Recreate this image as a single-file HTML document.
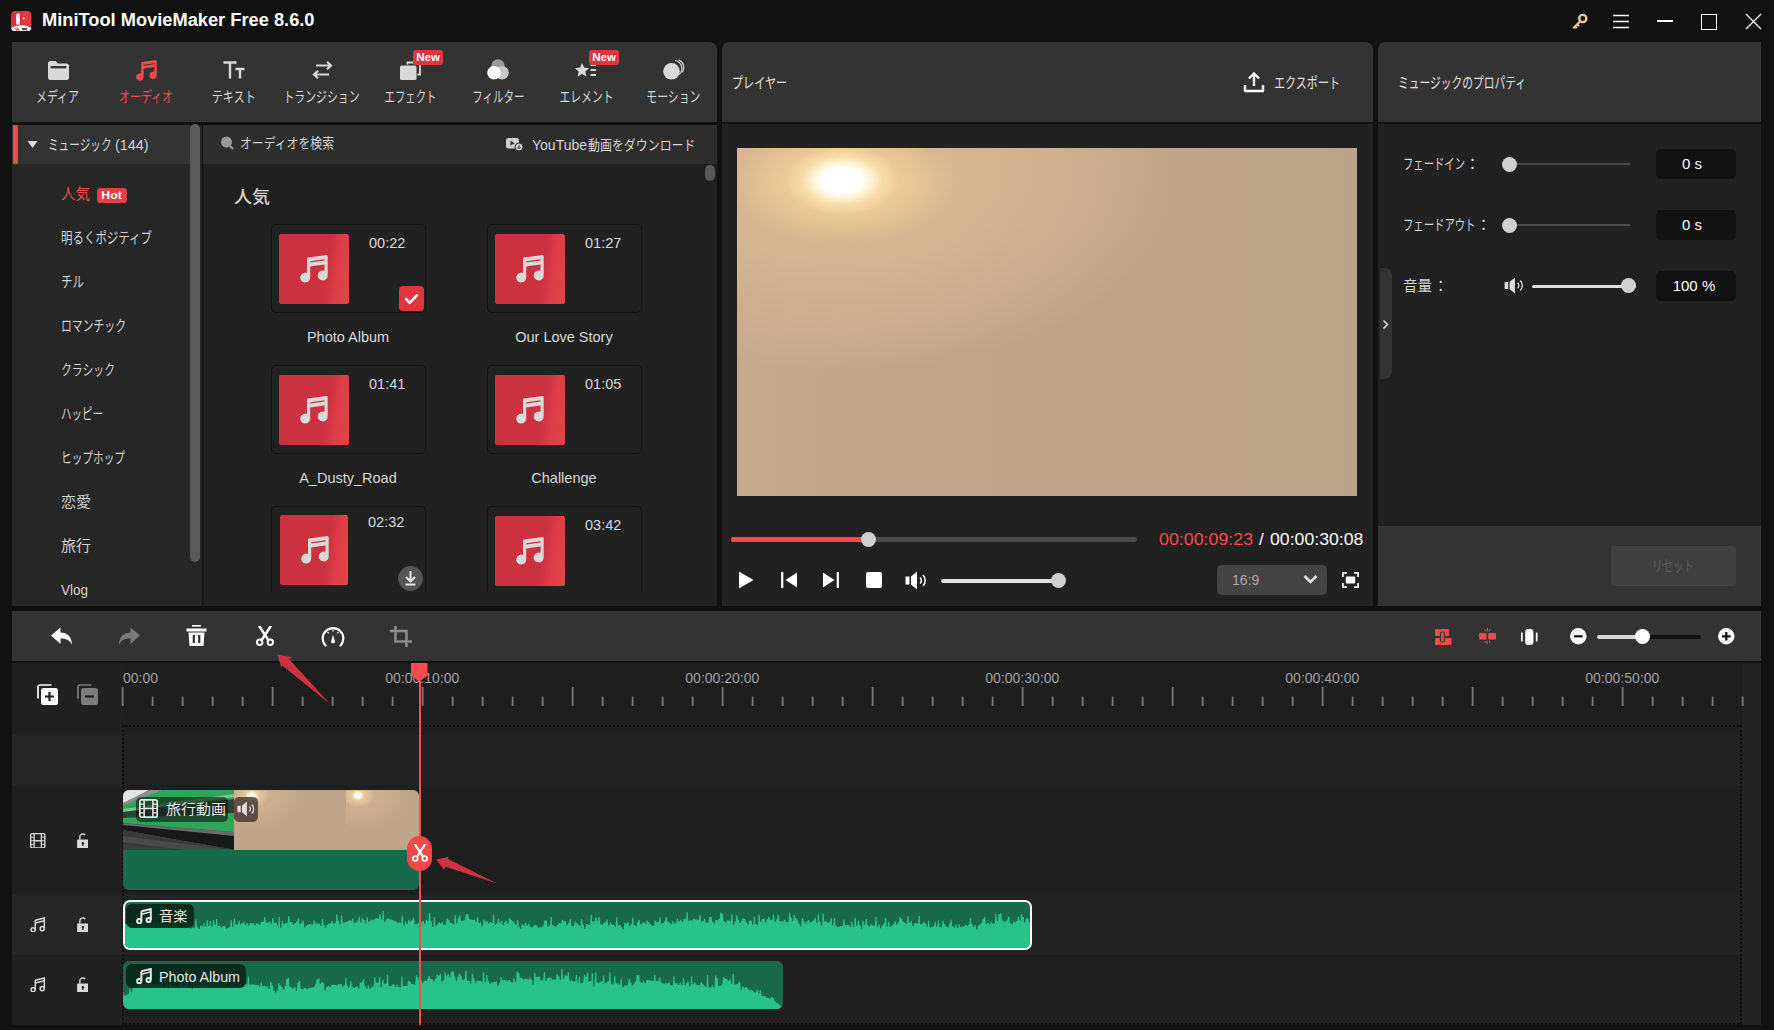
<!DOCTYPE html>
<html lang="ja"><head><meta charset="utf-8"><title>MiniTool MovieMaker Free 8.6.0</title>
<style>
html,body{margin:0;padding:0;background:#111;}
body{width:1774px;height:1030px;position:relative;overflow:hidden;font-family:"Liberation Sans","Noto Sans CJK JP",sans-serif;}
div,span.t,svg{position:absolute;}
span.t{white-space:pre;display:block;}
</style></head><body>
<span class="t" style="left:41.5px;top:6.5px;font-size:18px;line-height:27px;color:#ffffff;font-weight:700;transform:scaleX(1.014);transform-origin:0 50%;">MiniTool MovieMaker Free 8.6.0</span>
<svg style="left:11px;top:10.500px" width="20.500" height="20.500" viewBox="0 0 20.500 20.500"><defs><clipPath id="lg"><rect width="20.500" height="20.500" rx="4.500"/></clipPath></defs><g clip-path="url(#lg)"><rect width="20.500" height="20.500" fill="#d8303c"/><rect x="11" y="0" width="9.500" height="15" fill="#e23a40"/><path d="M5.200 4.200Q5.200 2.400 7.500 2.200Q8.900 2.300 8.900 4v9.400H5.200z" fill="#fff"/><path d="M11.500 6.500l2.600 0.200-1.200 2.400z" fill="#f6e2b0"/><ellipse cx="10.250" cy="20.500" rx="12" ry="6.200" fill="#fff"/><path d="M4.500 17.500l1 1.500 1.200-1.500 1.500 1.800" stroke="#d8303c" stroke-width="1.100" fill="none"/><rect x="11" y="17.200" width="5" height="1.600" fill="#222"/><rect x="3" y="19.700" width="14.500" height="0.800" fill="#f0909a"/></g></svg>
<svg style="left:1570px;top:12px" width="20" height="20" viewBox="0 0 20 20"><circle cx="12.800" cy="6.500" r="3.600" fill="none" stroke="#efc79a" stroke-width="2.400"/><path d="M10 9.500L3.300 16.200M5 14.500l1.800 1.800M7.200 12.300l1.800 1.800" stroke="#efc79a" stroke-width="2.200" fill="none"/></svg>
<svg style="left:1613px;top:14px" width="17" height="15" viewBox="0 0 17 15"><path d="M0 1.5h16M0 7.5h16M0 13.5h16" stroke="#fff" stroke-width="1.700"/></svg>
<div style="left:1657px;top:20.3px;width:16px;height:1.5px;background:#fff;"></div>
<div style="left:1701px;top:14px;width:14px;height:14px;background:transparent;border:1px solid #fff;"></div>
<svg style="left:1745px;top:13px" width="17" height="17" viewBox="0 0 17 17"><path d="M1 1l15 15M16 1L1 16" stroke="#fff" stroke-width="1.300"/></svg>
<div style="left:12px;top:42px;width:705px;height:80px;background:#333;border-radius:0 7px 0 0;"></div>
<span class="t" style="left:27.5px;top:86.0px;font-size:15px;line-height:22px;color:#d4d4d4;font-weight:400;transform:scaleX(0.729);transform-origin:50% 50%;">メディア</span>
<span class="t" style="left:109.0px;top:86.0px;font-size:15px;line-height:22px;color:#f64a4a;font-weight:400;transform:scaleX(0.730);transform-origin:50% 50%;">オーディオ</span>
<span class="t" style="left:204.2px;top:86.0px;font-size:15px;line-height:22px;color:#d4d4d4;font-weight:400;transform:scaleX(0.739);transform-origin:50% 50%;">テキスト</span>
<span class="t" style="left:268.5px;top:86.0px;font-size:15px;line-height:22px;color:#d4d4d4;font-weight:400;transform:scaleX(0.724);transform-origin:50% 50%;">トランジション</span>
<span class="t" style="left:372.5px;top:86.0px;font-size:15px;line-height:22px;color:#d4d4d4;font-weight:400;transform:scaleX(0.693);transform-origin:50% 50%;">エフェクト</span>
<span class="t" style="left:460.6px;top:86.0px;font-size:15px;line-height:22px;color:#d4d4d4;font-weight:400;transform:scaleX(0.696);transform-origin:50% 50%;">フィルター</span>
<span class="t" style="left:548.5px;top:86.0px;font-size:15px;line-height:22px;color:#d4d4d4;font-weight:400;transform:scaleX(0.720);transform-origin:50% 50%;">エレメント</span>
<span class="t" style="left:635.6px;top:86.0px;font-size:15px;line-height:22px;color:#d4d4d4;font-weight:400;transform:scaleX(0.723);transform-origin:50% 50%;">モーション</span>
<div style="left:12px;top:124.6px;width:190px;height:481.4px;background:#262626;"></div>
<div style="left:12px;top:124.6px;width:178px;height:39.4px;background:#333;"></div>
<div style="left:13px;top:124.7px;width:5.2px;height:39.3px;background:#f74a4a;"></div>
<div style="left:190px;top:124px;width:10px;height:438px;background:#5a5a5a;border-radius:5px;"></div>
<svg style="left:27px;top:140px" width="11" height="9" viewBox="0 0 11 9"><path d="M0.5 1h10L5.5 8z" fill="#ddd"/></svg>
<span class="t" style="left:48.0px;top:134.0px;font-size:15px;line-height:22px;color:#d4d4d4;font-weight:400;transform:scaleX(0.708);transform-origin:0 50%;">ミュージック</span>
<span class="t" style="left:111.0px;top:134.0px;font-size:15px;line-height:22px;color:#d4d4d4;font-weight:400;transform:scaleX(0.957);transform-origin:0 50%;"> (144)</span>
<span class="t" style="left:61.0px;top:182.5px;font-size:15px;line-height:22px;color:#f64a4a;font-weight:400;transform:scaleX(0.966);transform-origin:0 50%;">人気</span>
<span class="t" style="left:61.0px;top:226.5px;font-size:15px;line-height:22px;color:#d4d4d4;font-weight:400;transform:scaleX(0.764);transform-origin:0 50%;">明るくポジティブ</span>
<span class="t" style="left:61.0px;top:270.5px;font-size:15px;line-height:22px;color:#d4d4d4;font-weight:400;transform:scaleX(0.766);transform-origin:0 50%;">チル</span>
<span class="t" style="left:61.0px;top:314.5px;font-size:15px;line-height:22px;color:#d4d4d4;font-weight:400;transform:scaleX(0.722);transform-origin:0 50%;">ロマンチック</span>
<span class="t" style="left:61.0px;top:358.5px;font-size:15px;line-height:22px;color:#d4d4d4;font-weight:400;transform:scaleX(0.723);transform-origin:0 50%;">クラシック</span>
<span class="t" style="left:61.0px;top:402.5px;font-size:15px;line-height:22px;color:#d4d4d4;font-weight:400;transform:scaleX(0.700);transform-origin:0 50%;">ハッピー</span>
<span class="t" style="left:61.0px;top:446.5px;font-size:15px;line-height:22px;color:#d4d4d4;font-weight:400;transform:scaleX(0.711);transform-origin:0 50%;">ヒップホップ</span>
<span class="t" style="left:61.0px;top:490.5px;font-size:15px;line-height:22px;color:#d4d4d4;font-weight:400;">恋愛</span>
<span class="t" style="left:61.0px;top:534.5px;font-size:15px;line-height:22px;color:#d4d4d4;font-weight:400;">旅行</span>
<span class="t" style="left:61.0px;top:578.5px;font-size:15px;line-height:22px;color:#d4d4d4;font-weight:400;transform:scaleX(0.899);transform-origin:0 50%;">Vlog</span>
<div style="left:97px;top:188px;width:30px;height:15px;background:#e63e46;border-radius:3px;"></div>
<span class="t" style="left:102.4px;top:186.8px;font-size:11.5px;line-height:17px;color:#fff;font-weight:700;transform:scaleX(1.069);transform-origin:50% 50%;">Hot</span>
<div style="left:202.5px;top:124.6px;width:514.5px;height:39.8px;background:#2d2d2d;"></div>
<div style="left:202.5px;top:164.4px;width:514.5px;height:441.6px;background:#202020;"></div>
<div style="left:705px;top:165px;width:10px;height:16px;background:#5a5a5a;border-radius:5px;"></div>
<span class="t" style="left:240.0px;top:133.0px;font-size:14px;line-height:21px;color:#d4d4d4;font-weight:400;transform:scaleX(0.847);transform-origin:0 50%;">オーディオを検索</span>
<span class="t" style="left:532.0px;top:134.5px;font-size:14px;line-height:21px;color:#d4d4d4;font-weight:400;">YouTube</span>
<span class="t" style="left:587.5px;top:134.5px;font-size:14px;line-height:21px;color:#d4d4d4;font-weight:400;transform:scaleX(0.853);transform-origin:0 50%;">動画をダウンロード</span>
<span class="t" style="left:234.0px;top:184.5px;font-size:17px;line-height:26px;color:#d4d4d4;font-weight:500;transform:scaleX(1.059);transform-origin:0 50%;">人気</span>
<div style="left:271.3px;top:224.3px;width:154.5px;height:88.5px;background:#212121;box-sizing:border-box;border:1px solid #131313;border-radius:5px;"></div>
<div style="left:279px;top:234px;width:70px;height:70px;background:linear-gradient(98deg,#cc3140 66%,#dc3d47 80%,#e4454a 100%);border-radius:2px;"></div>
<svg style="left:300.2px;top:255px" width="28" height="28" viewBox="0 0 28 28"><path fill-rule="evenodd" d="M7 3.600Q7 2.700 7.900 2.550L26.600 0Q27.700 0 27.700 1.100V20.400a5 5 0 1 1-3.200-4.660V9.400L10.200 11.400V22.600a5 5 0 1 1-3.200-4.660zM10.200 6.200L24.500 4.200V5.500L10.200 7.500z" fill="#d9d9d6"/></svg>
<span class="t" style="left:369.0px;top:232.0px;font-size:14.5px;line-height:22px;color:#d9d9d9;font-weight:400;">00:22</span>
<span class="t" style="left:306.9px;top:326.0px;font-size:14.5px;line-height:22px;color:#d9d9d9;font-weight:400;">Photo Album</span>
<div style="left:487.3px;top:224.3px;width:154.5px;height:88.5px;background:#212121;box-sizing:border-box;border:1px solid #131313;border-radius:5px;"></div>
<div style="left:495px;top:234px;width:70px;height:70px;background:linear-gradient(98deg,#cc3140 66%,#dc3d47 80%,#e4454a 100%);border-radius:2px;"></div>
<svg style="left:516.2px;top:255px" width="28" height="28" viewBox="0 0 28 28"><path fill-rule="evenodd" d="M7 3.600Q7 2.700 7.900 2.550L26.600 0Q27.700 0 27.700 1.100V20.400a5 5 0 1 1-3.200-4.660V9.400L10.200 11.400V22.600a5 5 0 1 1-3.200-4.660zM10.200 6.200L24.500 4.200V5.500L10.200 7.500z" fill="#d9d9d6"/></svg>
<span class="t" style="left:585.0px;top:232.0px;font-size:14.5px;line-height:22px;color:#d9d9d9;font-weight:400;">01:27</span>
<span class="t" style="left:515.2px;top:326.0px;font-size:14.5px;line-height:22px;color:#d9d9d9;font-weight:400;">Our Love Story</span>
<div style="left:271.3px;top:365.3px;width:154.5px;height:88.5px;background:#212121;box-sizing:border-box;border:1px solid #131313;border-radius:5px;"></div>
<div style="left:279px;top:375px;width:70px;height:70px;background:linear-gradient(98deg,#cc3140 66%,#dc3d47 80%,#e4454a 100%);border-radius:2px;"></div>
<svg style="left:300.2px;top:396px" width="28" height="28" viewBox="0 0 28 28"><path fill-rule="evenodd" d="M7 3.600Q7 2.700 7.900 2.550L26.600 0Q27.700 0 27.700 1.100V20.400a5 5 0 1 1-3.200-4.660V9.400L10.200 11.400V22.600a5 5 0 1 1-3.200-4.660zM10.200 6.200L24.500 4.200V5.500L10.200 7.500z" fill="#d9d9d6"/></svg>
<span class="t" style="left:369.0px;top:373.0px;font-size:14.5px;line-height:22px;color:#d9d9d9;font-weight:400;">01:41</span>
<span class="t" style="left:299.2px;top:467.0px;font-size:14.5px;line-height:22px;color:#d9d9d9;font-weight:400;">A_Dusty_Road</span>
<div style="left:487.3px;top:365.3px;width:154.5px;height:88.5px;background:#212121;box-sizing:border-box;border:1px solid #131313;border-radius:5px;"></div>
<div style="left:495px;top:375px;width:70px;height:70px;background:linear-gradient(98deg,#cc3140 66%,#dc3d47 80%,#e4454a 100%);border-radius:2px;"></div>
<svg style="left:516.2px;top:396px" width="28" height="28" viewBox="0 0 28 28"><path fill-rule="evenodd" d="M7 3.600Q7 2.700 7.900 2.550L26.600 0Q27.700 0 27.700 1.100V20.400a5 5 0 1 1-3.200-4.660V9.400L10.200 11.400V22.600a5 5 0 1 1-3.200-4.660zM10.200 6.200L24.500 4.200V5.500L10.200 7.500z" fill="#d9d9d6"/></svg>
<span class="t" style="left:585.0px;top:373.0px;font-size:14.5px;line-height:22px;color:#d9d9d9;font-weight:400;">01:05</span>
<span class="t" style="left:531.3px;top:467.0px;font-size:14.5px;line-height:22px;color:#d9d9d9;font-weight:400;">Challenge</span>
<div style="left:271.3px;top:506.3px;width:154.5px;height:86px;background:#212121;box-sizing:border-box;border:1px solid #131313;border-radius:5px;border-bottom:none;border-radius:5px 5px 0 0;"></div>
<div style="left:280px;top:515px;width:68px;height:70.3px;background:linear-gradient(98deg,#cc3140 66%,#dc3d47 80%,#e4454a 100%);border-radius:2px;"></div>
<svg style="left:301.2px;top:536px" width="28" height="28" viewBox="0 0 28 28"><path fill-rule="evenodd" d="M7 3.600Q7 2.700 7.900 2.550L26.600 0Q27.700 0 27.700 1.100V20.400a5 5 0 1 1-3.200-4.660V9.400L10.200 11.400V22.600a5 5 0 1 1-3.200-4.660zM10.200 6.200L24.500 4.200V5.500L10.200 7.500z" fill="#d9d9d6"/></svg>
<span class="t" style="left:368.0px;top:511.0px;font-size:14.5px;line-height:22px;color:#d9d9d9;font-weight:400;">02:32</span>
<div style="left:487.3px;top:506.3px;width:154.5px;height:86px;background:#212121;box-sizing:border-box;border:1px solid #131313;border-radius:5px;border-bottom:none;border-radius:5px 5px 0 0;"></div>
<div style="left:495px;top:516px;width:70px;height:70px;background:linear-gradient(98deg,#cc3140 66%,#dc3d47 80%,#e4454a 100%);border-radius:2px;"></div>
<svg style="left:516.2px;top:537px" width="28" height="28" viewBox="0 0 28 28"><path fill-rule="evenodd" d="M7 3.600Q7 2.700 7.900 2.550L26.600 0Q27.700 0 27.700 1.100V20.400a5 5 0 1 1-3.200-4.660V9.400L10.200 11.400V22.600a5 5 0 1 1-3.200-4.660zM10.200 6.200L24.500 4.200V5.500L10.200 7.500z" fill="#d9d9d6"/></svg>
<span class="t" style="left:585.0px;top:514.0px;font-size:14.5px;line-height:22px;color:#d9d9d9;font-weight:400;">03:42</span>
<div style="left:202.5px;top:592px;width:514.5px;height:14px;background:#202020;"></div>
<svg style="left:399px;top:286px" width="25" height="25" viewBox="0 0 25 25"><rect width="25" height="25" rx="4" fill="#e0353f"/><path d="M6.5 12.5l4.2 4.2 8-8" stroke="#fff" stroke-width="2.6" fill="none"/></svg>
<svg style="left:398px;top:566px" width="25" height="25" viewBox="0 0 25 25"><circle cx="12.5" cy="12.5" r="12.400" fill="#555"/><path d="M12.5 5v10M8 11l4.5 4.5L17 11M7.5 18.5h10" stroke="#e8e8e8" stroke-width="2" fill="none"/></svg>
<div style="left:722px;top:42px;width:651px;height:80px;background:#333;border-radius:7px 7px 0 0;"></div>
<div style="left:722px;top:124.4px;width:651px;height:481.6px;background:#212121;"></div>
<span class="t" style="left:732.0px;top:72.0px;font-size:15px;line-height:22px;color:#e0e0e0;font-weight:400;transform:scaleX(0.738);transform-origin:0 50%;">プレイヤー</span>
<span class="t" style="left:1274.0px;top:71.7px;font-size:15px;line-height:22px;color:#e0e0e0;font-weight:400;transform:scaleX(0.737);transform-origin:0 50%;">エクスポート</span>
<svg style="left:1243px;top:71px" width="22" height="23" viewBox="0 0 22 23"><path d="M2 14v6h18v-6" stroke="#fff" stroke-width="2.4" fill="none" stroke-linejoin="round"/><path d="M11 15V3M6 7.5L11 2.5l5 5" stroke="#fff" stroke-width="2.4" fill="none"/></svg>
<div style="left:737px;top:148px;width:620px;height:348px;background:radial-gradient(ellipse 38px 23px at 105px 32.500px,#fff 0%,#fff 52%,rgba(255,247,218,.95) 75%,rgba(253,234,184,.55) 105%,rgba(250,226,176,0) 150%),radial-gradient(ellipse 112px 60px at 107px 35px,rgba(249,216,162,.95) 0%,rgba(243,207,154,.75) 50%,rgba(232,196,150,0) 100%),radial-gradient(ellipse 345px 205px at 105px 20px,rgba(222,187,146,1) 0%,rgba(214,182,146,.85) 50%,rgba(200,172,142,0) 100%),linear-gradient(90deg,#c4a98c 0%,#bfa58a 45%,#bca48b 100%);"></div>
<div style="left:731px;top:536.5px;width:406px;height:5px;background:#4b4b4b;border-radius:2.500px;"></div>
<div style="left:731px;top:536.5px;width:137px;height:5px;background:#f64a4a;border-radius:2.500px;"></div>
<div style="left:861px;top:531.5px;width:15px;height:15px;background:#d0d0d0;border-radius:50%;"></div>
<span class="t" style="left:1159.0px;top:527.0px;font-size:17px;line-height:26px;color:#f64a4a;font-weight:400;transform:scaleX(1.047);transform-origin:0 50%;">00:00:09:23</span>
<span class="t" style="left:1258.9px;top:527.0px;font-size:17px;line-height:26px;color:#ffffff;font-weight:400;">/</span>
<span class="t" style="left:1270.0px;top:527.0px;font-size:17px;line-height:26px;color:#ffffff;font-weight:400;transform:scaleX(1.040);transform-origin:0 50%;">00:00:30:08</span>
<svg style="left:738px;top:571px" width="16" height="18" viewBox="0 0 16 18"><path d="M1 0.5L15.5 9 1 17.5z" fill="#fff"/></svg>
<svg style="left:780px;top:572px" width="18" height="16" viewBox="0 0 18 16"><path d="M2.200 0v16" stroke="#fff" stroke-width="2.200"/><path d="M17 0.500v15L5.500 8z" fill="#fff"/></svg>
<svg style="left:822px;top:572px" width="18" height="16" viewBox="0 0 18 16"><path d="M15.800 0v16" stroke="#fff" stroke-width="2.200"/><path d="M1 0.500v15L12.500 8z" fill="#fff"/></svg>
<div style="left:866px;top:572px;width:16px;height:16px;background:#fff;border-radius:2px;"></div>
<svg style="left:905px;top:571px" width="23" height="19" viewBox="0 0 23 19"><path d="M0.5 5.5h4v8h-4z M6 5.5L12 0.5v18L6 13.5z" fill="#fff"/><path d="M15 6.5a4 4 0 0 1 0 6M18 4a8 8 0 0 1 0 11" stroke="#fff" stroke-width="1.5" fill="none"/></svg>
<div style="left:941px;top:578.5px;width:118px;height:4px;background:#e0e0e0;border-radius:2px;"></div>
<div style="left:1051px;top:573px;width:15px;height:15px;background:#d0d0d0;border-radius:50%;"></div>
<div style="left:1217px;top:565px;width:110px;height:30px;background:#444;border-radius:5px;"></div>
<span class="t" style="left:1232.0px;top:569.5px;font-size:14px;line-height:21px;color:#a8a8a8;font-weight:400;">16:9</span>
<svg style="left:1303px;top:574px" width="15" height="11" viewBox="0 0 15 11"><path d="M1.5 2l6 6 6-6" stroke="#ddd" stroke-width="2.6" fill="none"/></svg>
<svg style="left:1342px;top:572px" width="17" height="16" viewBox="0 0 17 16"><path d="M0.900 5V0.900h4M12 0.900h4.100V5M16.100 11v4.100H12M4.900 15.100H0.900V11" stroke="#fff" stroke-width="1.700" fill="none"/><rect x="3.800" y="4.600" width="9.400" height="6.800" rx="0.800" fill="#fff"/></svg>
<div style="left:1378px;top:42px;width:383px;height:80px;background:#333;border-radius:7px 0 0 0;"></div>
<div style="left:1378px;top:124.4px;width:383px;height:401.6px;background:#212121;"></div>
<div style="left:1378px;top:526px;width:383px;height:80px;background:#333;"></div>
<span class="t" style="left:1398.0px;top:71.8px;font-size:15px;line-height:22px;color:#e0e0e0;font-weight:400;transform:scaleX(0.716);transform-origin:0 50%;">ミュージックのプロパティ</span>
<span class="t" style="left:1403.0px;top:153.0px;font-size:15px;line-height:22px;color:#d4d4d4;font-weight:400;transform:scaleX(0.689);transform-origin:0 50%;">フェードイン</span>
<span class="t" style="left:1465.0px;top:153.0px;font-size:15px;line-height:22px;color:#d4d4d4;font-weight:400;">：</span>
<div style="left:1656px;top:149px;width:80px;height:30px;background:#111;border-radius:5px;"></div>
<span class="t" style="left:1403.0px;top:214.0px;font-size:15px;line-height:22px;color:#d4d4d4;font-weight:400;transform:scaleX(0.690);transform-origin:0 50%;">フェードアウト</span>
<span class="t" style="left:1476.1px;top:214.0px;font-size:15px;line-height:22px;color:#d4d4d4;font-weight:400;">：</span>
<div style="left:1656px;top:210px;width:80px;height:30px;background:#111;border-radius:5px;"></div>
<span class="t" style="left:1403.0px;top:275.0px;font-size:15px;line-height:22px;color:#d4d4d4;font-weight:400;transform:scaleX(0.966);transform-origin:0 50%;">音量</span>
<span class="t" style="left:1433.2px;top:275.0px;font-size:15px;line-height:22px;color:#d4d4d4;font-weight:400;">：</span>
<div style="left:1656px;top:271px;width:80px;height:30px;background:#111;border-radius:5px;"></div>
<div style="left:1503px;top:163px;width:127px;height:2px;background:#4a4a4a;"></div>
<div style="left:1502px;top:157px;width:15px;height:15px;background:#d0d0d0;border-radius:50%;"></div>
<span class="t" style="left:1682.0px;top:153.0px;font-size:15px;line-height:22px;color:#fff;font-weight:400;">0 s</span>
<div style="left:1503px;top:224px;width:127px;height:2px;background:#4a4a4a;"></div>
<div style="left:1502px;top:218px;width:15px;height:15px;background:#d0d0d0;border-radius:50%;"></div>
<span class="t" style="left:1682.0px;top:214.0px;font-size:15px;line-height:22px;color:#fff;font-weight:400;">0 s</span>
<svg style="left:1504px;top:277px" width="21" height="17" viewBox="0 0 23 19"><path d="M0.5 5.5h4v8h-4z M6 5.5L12 0.5v18L6 13.5z" fill="#ddd"/><path d="M15 6.5a4 4 0 0 1 0 6M18 4a8 8 0 0 1 0 11" stroke="#ddd" stroke-width="1.5" fill="none"/></svg>
<div style="left:1532px;top:285px;width:104px;height:3px;background:#e0e0e0;border-radius:2px;"></div>
<div style="left:1621px;top:278px;width:15px;height:15px;background:#d0d0d0;border-radius:50%;"></div>
<span class="t" style="left:1672.7px;top:275.0px;font-size:15px;line-height:22px;color:#fff;font-weight:400;">100 %</span>
<div style="left:1380px;top:268px;width:12px;height:111px;background:#333;border-radius:0 8px 8px 0;"></div>
<svg style="left:1382px;top:319px" width="8" height="11" viewBox="0 0 8 11"><path d="M1.5 1.5l4 4-4 4" stroke="#ddd" stroke-width="1.6" fill="none"/></svg>
<div style="left:1611px;top:546px;width:125px;height:40px;background:#3f3f3f;border-radius:3px;"></div>
<span class="t" style="left:1643.0px;top:555.0px;font-size:15px;line-height:22px;color:#5c5c5c;font-weight:400;transform:scaleX(0.700);transform-origin:50% 50%;">リセット</span>
<div style="left:12px;top:611px;width:1749px;height:50px;background:#333;"></div>
<div style="left:12px;top:663px;width:110px;height:361.7px;background:#212121;"></div>
<div style="left:122px;top:663px;width:1639px;height:361.7px;background:#1e1e1e;"></div>
<div style="left:122px;top:1014.6px;width:1620px;height:10px;background:#202020;"></div>
<div style="left:12px;top:735px;width:1749px;height:50px;background:#232323;"></div>
<div style="left:12px;top:895px;width:1749px;height:60px;background:#232323;"></div>
<div style="left:12px;top:735px;width:110px;height:50px;background:#262626;"></div>
<div style="left:12px;top:895px;width:110px;height:60px;background:#262626;"></div>
<div style="left:1742px;top:663px;width:19px;height:361.7px;background:#232323;"></div>
<div style="left:122px;top:725px;width:1620px;height:0px;background:transparent;border-top:2px dotted #0e0e0e;"></div>
<div style="left:122px;top:1023px;width:1620px;height:0px;background:transparent;border-top:2px dotted #0e0e0e;"></div>
<div style="left:1740px;top:725px;width:0px;height:299px;background:transparent;border-left:2px dotted #0e0e0e;"></div>
<div style="left:121.5px;top:725px;width:0px;height:299px;background:transparent;border-left:2px dotted #111;"></div>
<svg style="left:0;top:663px" width="1774" height="50"><rect x="121.7" y="24" width="1.900" height="18.9" fill="#757575"/><rect x="151.7" y="33.5" width="1.900" height="9.4" fill="#757575"/><rect x="181.7" y="33.5" width="1.900" height="9.4" fill="#757575"/><rect x="211.7" y="33.5" width="1.900" height="9.4" fill="#757575"/><rect x="241.7" y="33.5" width="1.900" height="9.4" fill="#757575"/><rect x="271.7" y="24" width="1.900" height="18.9" fill="#757575"/><rect x="301.7" y="33.5" width="1.900" height="9.4" fill="#757575"/><rect x="331.7" y="33.5" width="1.900" height="9.4" fill="#757575"/><rect x="361.7" y="33.5" width="1.900" height="9.4" fill="#757575"/><rect x="391.7" y="33.5" width="1.900" height="9.4" fill="#757575"/><rect x="421.7" y="24" width="1.900" height="18.9" fill="#757575"/><rect x="451.7" y="33.5" width="1.900" height="9.4" fill="#757575"/><rect x="481.7" y="33.5" width="1.900" height="9.4" fill="#757575"/><rect x="511.7" y="33.5" width="1.900" height="9.4" fill="#757575"/><rect x="541.7" y="33.5" width="1.900" height="9.4" fill="#757575"/><rect x="571.7" y="24" width="1.900" height="18.9" fill="#757575"/><rect x="601.7" y="33.5" width="1.900" height="9.4" fill="#757575"/><rect x="631.7" y="33.5" width="1.900" height="9.4" fill="#757575"/><rect x="661.7" y="33.5" width="1.900" height="9.4" fill="#757575"/><rect x="691.7" y="33.5" width="1.900" height="9.4" fill="#757575"/><rect x="721.7" y="24" width="1.900" height="18.9" fill="#757575"/><rect x="751.7" y="33.5" width="1.900" height="9.4" fill="#757575"/><rect x="781.7" y="33.5" width="1.900" height="9.4" fill="#757575"/><rect x="811.7" y="33.5" width="1.900" height="9.4" fill="#757575"/><rect x="841.7" y="33.5" width="1.900" height="9.4" fill="#757575"/><rect x="871.7" y="24" width="1.900" height="18.9" fill="#757575"/><rect x="901.7" y="33.5" width="1.900" height="9.4" fill="#757575"/><rect x="931.7" y="33.5" width="1.900" height="9.4" fill="#757575"/><rect x="961.7" y="33.5" width="1.900" height="9.4" fill="#757575"/><rect x="991.7" y="33.5" width="1.900" height="9.4" fill="#757575"/><rect x="1021.7" y="24" width="1.900" height="18.9" fill="#757575"/><rect x="1051.7" y="33.5" width="1.900" height="9.4" fill="#757575"/><rect x="1081.7" y="33.5" width="1.900" height="9.4" fill="#757575"/><rect x="1111.7" y="33.5" width="1.900" height="9.4" fill="#757575"/><rect x="1141.7" y="33.5" width="1.900" height="9.4" fill="#757575"/><rect x="1171.7" y="24" width="1.900" height="18.9" fill="#757575"/><rect x="1201.7" y="33.5" width="1.900" height="9.4" fill="#757575"/><rect x="1231.7" y="33.5" width="1.900" height="9.4" fill="#757575"/><rect x="1261.7" y="33.5" width="1.900" height="9.4" fill="#757575"/><rect x="1291.7" y="33.5" width="1.900" height="9.4" fill="#757575"/><rect x="1321.7" y="24" width="1.900" height="18.9" fill="#757575"/><rect x="1351.7" y="33.5" width="1.900" height="9.4" fill="#757575"/><rect x="1381.7" y="33.5" width="1.900" height="9.4" fill="#757575"/><rect x="1411.7" y="33.5" width="1.900" height="9.4" fill="#757575"/><rect x="1441.7" y="33.5" width="1.900" height="9.4" fill="#757575"/><rect x="1471.7" y="24" width="1.900" height="18.9" fill="#757575"/><rect x="1501.7" y="33.5" width="1.900" height="9.4" fill="#757575"/><rect x="1531.7" y="33.5" width="1.900" height="9.4" fill="#757575"/><rect x="1561.7" y="33.5" width="1.900" height="9.4" fill="#757575"/><rect x="1591.7" y="33.5" width="1.900" height="9.4" fill="#757575"/><rect x="1621.7" y="24" width="1.900" height="18.9" fill="#757575"/><rect x="1651.7" y="33.5" width="1.900" height="9.4" fill="#757575"/><rect x="1681.7" y="33.5" width="1.900" height="9.4" fill="#757575"/><rect x="1711.7" y="33.5" width="1.900" height="9.4" fill="#757575"/><rect x="1741.7" y="33.5" width="1.900" height="9.4" fill="#757575"/></svg>
<span class="t" style="left:123.0px;top:666.7px;font-size:14.5px;line-height:22px;color:#a0a0a0;font-weight:400;transform:scaleX(0.964);transform-origin:0 50%;">00:00</span>
<span class="t" style="left:383.9px;top:666.7px;font-size:14.5px;line-height:22px;color:#a0a0a0;font-weight:400;transform:scaleX(0.966);transform-origin:50% 50%;">00:00:10:00</span>
<span class="t" style="left:683.9px;top:666.7px;font-size:14.5px;line-height:22px;color:#a0a0a0;font-weight:400;transform:scaleX(0.966);transform-origin:50% 50%;">00:00:20:00</span>
<span class="t" style="left:983.9px;top:666.7px;font-size:14.5px;line-height:22px;color:#a0a0a0;font-weight:400;transform:scaleX(0.966);transform-origin:50% 50%;">00:00:30:00</span>
<span class="t" style="left:1283.9px;top:666.7px;font-size:14.5px;line-height:22px;color:#a0a0a0;font-weight:400;transform:scaleX(0.966);transform-origin:50% 50%;">00:00:40:00</span>
<span class="t" style="left:1583.9px;top:666.7px;font-size:14.5px;line-height:22px;color:#a0a0a0;font-weight:400;transform:scaleX(0.966);transform-origin:50% 50%;">00:00:50:00</span>
<svg style="left:48px;top:61px" width="21" height="19" viewBox="0 0 21 19"><path d="M0 2.5A2.5 2.5 0 0 1 2.5 0h5.2l2.3 2.6h8.5A2.5 2.5 0 0 1 21 5.1v11.4A2.5 2.5 0 0 1 18.500 19h-16A2.5 2.500 0 0 1 0 16.500z" fill="#d9d9d9"/><rect x="2.6" y="5" width="15.800" height="2.400" fill="#333"/></svg>
<svg style="left:136px;top:59.500px" width="21" height="21" viewBox="0 0 28 28"><path fill-rule="evenodd" d="M7 3.600Q7 2.700 7.900 2.550L26.600 0Q27.700 0 27.700 1.100V20.400a5 5 0 1 1-3.200-4.660V9.400L10.200 11.400V22.600a5 5 0 1 1-3.200-4.660zM10.200 6.200L24.500 4.200V5.500L10.200 7.500z" fill="#f64a4a"/></svg>
<svg style="left:223px;top:61px" width="22" height="18" viewBox="0 0 22 18"><path d="M0.500 1.500h13M7 1.500v16M12.500 8h9M17 8v9.500" stroke="#d9d9d9" stroke-width="2.400" fill="none"/></svg>
<svg style="left:312px;top:61px" width="21" height="18" viewBox="0 0 21 18"><path d="M4 4.500h15M15 0.800l4 3.700-4 3.700M17 13.500H2M6 9.800l-4 3.700 4 3.700" stroke="#d9d9d9" stroke-width="2.200" fill="none"/></svg>
<svg style="left:400px;top:61px" width="21" height="19" viewBox="0 0 21 19"><path d="M7.500 3.500V1.500h12.500v12h-2.500" stroke="#d9d9d9" stroke-width="1.800" fill="none"/><rect x="0" y="4.500" width="16.500" height="14.500" rx="1.500" fill="#d9d9d9"/></svg>
<svg style="left:487px;top:59px" width="22" height="21" viewBox="0 0 22 21"><circle cx="11" cy="7" r="6.800" fill="#9a9a9a"/><circle cx="15" cy="13.700" r="6.800" fill="#c9c9c9"/><circle cx="7" cy="13.700" r="6.800" fill="#fff"/></svg>
<svg style="left:575px;top:63px" width="22" height="15" viewBox="0 0 22 15"><path d="M7 0l2.100 4.600 5 .6-3.700 3.400 1 4.900L7 11.100 2.600 13.500l1-4.900L0 5.200l5-.6z" fill="#d9d9d9"/><path d="M15.500 2h5.500M15.500 7h5.500M15.500 12h5.500" stroke="#d9d9d9" stroke-width="2"/></svg>
<svg style="left:662px;top:59px" width="23" height="21" viewBox="0 0 23 21"><path d="M13 1.500a8 8 0 0 1 4 14" stroke="#d9d9d9" stroke-width="1.200" fill="none"/><path d="M16.500 0.800a8 8 0 0 1 3.500 12.500" stroke="#d9d9d9" stroke-width="1.200" fill="none"/><circle cx="9.500" cy="12.300" r="8.300" fill="#d9d9d9"/></svg>
<div style="left:413px;top:50px;width:30px;height:15px;background:#e0353f;border-radius:3px;"></div>
<span class="t" style="left:416.2px;top:49.0px;font-size:11.5px;line-height:17px;color:#fff;font-weight:700;">New</span>
<div style="left:589px;top:50px;width:30px;height:15px;background:#e0353f;border-radius:3px;"></div>
<span class="t" style="left:592.2px;top:49.0px;font-size:11.5px;line-height:17px;color:#fff;font-weight:700;">New</span>
<svg style="left:220px;top:136px" width="14" height="14" viewBox="0 0 14 14"><circle cx="6.500" cy="6" r="5.500" fill="#9a9a9a"/><path d="M10 10l3 3" stroke="#9a9a9a" stroke-width="2.400"/></svg>
<svg style="left:506px;top:138px" width="17" height="13" viewBox="0 0 17 13"><rect x="0" y="0" width="13" height="10.500" rx="2.500" fill="#d0d0d0"/><path d="M4.500 2.800v5l4.200-2.500z" fill="#303030"/><circle cx="13" cy="9" r="4" fill="#d0d0d0" stroke="#303030" stroke-width="1"/><path d="M13 6.800v3.800M11.500 9.200l1.500 1.500 1.500-1.500" stroke="#303030" stroke-width="0.900" fill="none"/></svg>
<svg style="left:51px;top:627px" width="21" height="18" viewBox="0 0 21 18"><path d="M9.500 0.500v5c7 0 11 4 11.500 12-2.500-4.500-6-6-11.500-6v5.500L0 8.500z" fill="#fff"/></svg>
<svg style="left:119px;top:627px" width="21" height="18" viewBox="0 0 21 18"><g transform="translate(21,0) scale(-1,1)"><path d="M9.500 0.500v5c7 0 11 4 11.500 12-2.500-4.500-6-6-11.500-6v5.500L0 8.500z" fill="#7a7a7a"/></g></svg>
<svg style="left:186px;top:625px" width="21" height="21" viewBox="0 0 21 21"><path d="M6 0.800h9" stroke="#fff" stroke-width="1.600"/><rect x="0.500" y="3.500" width="20" height="3" fill="#fff"/><path d="M2.500 7.500h16l-1 13.500h-14z" fill="#fff"/><path d="M7.800 10v8M13.200 10v8" stroke="#333" stroke-width="2.200"/></svg>
<svg style="left:256px;top:625.500px" width="18" height="20" viewBox="0 0 18 20"><path d="M3.500 0.500l8.500 13M14.500 0.500L6 13.500" stroke="#fff" stroke-width="2.500" stroke-linecap="round"/><circle cx="3.700" cy="16.200" r="2.700" fill="none" stroke="#fff" stroke-width="2"/><circle cx="14.300" cy="16.200" r="2.700" fill="none" stroke="#fff" stroke-width="2"/></svg>
<svg style="left:321px;top:626px" width="24" height="21" viewBox="0 0 24 21"><path d="M4.500 19.500A10.300 10.300 0 1 1 19.500 19.500" stroke="#fff" stroke-width="2.200" fill="none" stroke-linecap="round"/><path d="M12 8.500l1.800 6.500a1.850 1.850 0 1 1-3.600 0z" fill="#fff"/><path d="M12 3.500v2M6.500 6l1.200 1.400M17.500 6l-1.200 1.400" stroke="#fff" stroke-width="1.200"/></svg>
<svg style="left:390px;top:626px" width="22" height="21" viewBox="0 0 22 21"><path d="M0 5h16.500v16M5.500 0v15.500H22" stroke="#8a8a8a" stroke-width="2.600" fill="none"/></svg>
<svg style="left:1435px;top:628.500px" width="17" height="16" viewBox="0 0 17 16"><rect x="0" y="0" width="14" height="7" rx="1" fill="#f64a4a"/><rect x="0" y="9" width="16.500" height="7" rx="1" fill="#f64a4a"/><rect x="5.500" y="3" width="4" height="10" rx="1.500" fill="#f64a4a" stroke="#333" stroke-width="1.200"/></svg>
<svg style="left:1478.500px;top:628px" width="17" height="16" viewBox="0 0 17 16"><rect x="0" y="5" width="7.500" height="6.500" rx="1" fill="#f64a4a"/><rect x="9.200" y="5" width="7.800" height="6.500" rx="1" fill="#f64a4a"/><path d="M8.400 0v3.500M5.500 1l1.200 2.300M11.300 1l-1.200 2.300M8.400 16v-3.300M5.500 15.200l1.200-2.300M11.300 15.200l-1.200-2.300" stroke="#f64a4a" stroke-width="1"/></svg>
<svg style="left:1521px;top:628.500px" width="17" height="16" viewBox="0 0 17 16"><rect x="4.200" y="0" width="8.200" height="16" rx="3" fill="#fff"/><path d="M0.800 3.500v9M15.700 3.500v9" stroke="#fff" stroke-width="1.700"/></svg>
<svg style="left:1570px;top:628px" width="17" height="17" viewBox="0 0 17 17"><circle cx="8.300" cy="8.300" r="8.200" fill="#fff"/><path d="M4 8.300h8.600" stroke="#111" stroke-width="2.200"/></svg>
<svg style="left:1718px;top:628px" width="17" height="17" viewBox="0 0 17 17"><circle cx="8.300" cy="8.300" r="8.200" fill="#fff"/><path d="M4 8.300h8.600M8.300 4v8.600" stroke="#111" stroke-width="2.200"/></svg>
<div style="left:1597px;top:634.5px;width:104px;height:4px;background:#111;border-radius:2px;"></div>
<div style="left:1597px;top:634.5px;width:46px;height:4px;background:#d8d8d8;border-radius:2px;"></div>
<div style="left:1635px;top:629px;width:15px;height:15px;background:#fff;border-radius:50%;"></div>
<svg style="left:36.500px;top:683.500px" width="21" height="21" viewBox="0 0 21 21"><path d="M1 14.500V3a2 2 0 0 1 2-2h11.500" stroke="#fff" stroke-width="1.700" fill="none"/><rect x="4" y="4" width="17" height="17" rx="2.500" fill="#fff"/><path d="M8 12.500h9M12.500 8v9" stroke="#1e1e1e" stroke-width="2.200"/></svg>
<svg style="left:76.500px;top:683.500px" width="21" height="21" viewBox="0 0 21 21"><path d="M1 14.500V3a2 2 0 0 1 2-2h11.500" stroke="#7c7c7c" stroke-width="1.700" fill="none"/><rect x="4" y="4" width="17" height="17" rx="2.500" fill="#7c7c7c"/><path d="M8 12.500h9" stroke="#1e1e1e" stroke-width="2.200"/></svg>
<svg style="left:30px;top:832.5px" width="15.5" height="15.5" viewBox="0 0 16 16"><rect x="0.700" y="0.700" width="14.600" height="14.600" rx="1.500" fill="none" stroke="#d9d9d9" stroke-width="1.400"/><path d="M4.300 0.700v14.600M11.700 0.700v14.600M4.300 8h7.400" stroke="#d9d9d9" stroke-width="1.300"/><path d="M0.700 4.300h3.600M0.700 8h3.600M0.700 11.700h3.600M11.700 4.300h3.600M11.700 8h3.600M11.700 11.700h3.600" stroke="#d9d9d9" stroke-width="1"/></svg>
<svg style="left:76.5px;top:832.5px" width="11.800" height="15.400" viewBox="0 0 12 16"><path d="M2.800 7V4.200a3.200 3.200 0 0 1 5.600-2.100" stroke="#d9d9d9" stroke-width="1.500" fill="none"/><rect x="0" y="6.800" width="12" height="9.200" rx="0.800" fill="#d9d9d9"/><path d="M6 9.300a1.300 1.300 0 0 1 .7 2.400v1.800H5.300v-1.800A1.300 1.300 0 0 1 6 9.300z" fill="#222"/></svg>
<svg style="left:30px;top:916.5px" width="15.5" height="15.5" viewBox="0 0 16 16"><path d="M5.400 3.300L14.800 1v10.800M5.400 3.300v9.700" stroke="#d9d9d9" stroke-width="1.5" fill="none"/><path d="M5.400 6.200l9.400-2.300" stroke="#d9d9d9" stroke-width="1.400"/><circle cx="3.200" cy="13.200" r="2.100" fill="none" stroke="#d9d9d9" stroke-width="1.5"/><circle cx="12.600" cy="12" r="2.100" fill="none" stroke="#d9d9d9" stroke-width="1.5"/></svg>
<svg style="left:76.5px;top:916.5px" width="11.800" height="15.400" viewBox="0 0 12 16"><path d="M2.800 7V4.200a3.200 3.200 0 0 1 5.600-2.100" stroke="#d9d9d9" stroke-width="1.500" fill="none"/><rect x="0" y="6.800" width="12" height="9.200" rx="0.800" fill="#d9d9d9"/><path d="M6 9.300a1.300 1.300 0 0 1 .7 2.400v1.800H5.300v-1.800A1.300 1.300 0 0 1 6 9.300z" fill="#222"/></svg>
<svg style="left:30px;top:976.5px" width="15.5" height="15.5" viewBox="0 0 16 16"><path d="M5.400 3.300L14.800 1v10.800M5.400 3.300v9.700" stroke="#d9d9d9" stroke-width="1.5" fill="none"/><path d="M5.400 6.200l9.400-2.300" stroke="#d9d9d9" stroke-width="1.400"/><circle cx="3.200" cy="13.200" r="2.100" fill="none" stroke="#d9d9d9" stroke-width="1.5"/><circle cx="12.600" cy="12" r="2.100" fill="none" stroke="#d9d9d9" stroke-width="1.5"/></svg>
<svg style="left:76.5px;top:976.5px" width="11.800" height="15.400" viewBox="0 0 12 16"><path d="M2.800 7V4.200a3.200 3.200 0 0 1 5.600-2.100" stroke="#d9d9d9" stroke-width="1.500" fill="none"/><rect x="0" y="6.800" width="12" height="9.200" rx="0.800" fill="#d9d9d9"/><path d="M6 9.300a1.300 1.300 0 0 1 .7 2.400v1.800H5.300v-1.800A1.300 1.300 0 0 1 6 9.300z" fill="#222"/></svg>
<div style="left:123px;top:789.5px;width:296.3px;height:100.6px;background:#176b4c;border-radius:6px;overflow:hidden;"><div style="left:0px;top:0px;width:111px;height:60px;background:#555;overflow:hidden;"><svg style="left:0;top:0" width="111" height="60" viewBox="0 0 111 60"><rect width="111" height="60" fill="#4a4a4a"/><path d="M0 0h26L12 8 0 13z" fill="#e4e4e4"/><path d="M26 0h14L0 16v-3z" fill="#8a8f8a"/><path d="M0 15.500L40 0h71v42L0 33z" fill="#30a559"/><path d="M0 19L111 4v3L0 22z" fill="#7dc48f"/><path d="M0 22L111 9v14L0 28z" fill="#2c4436"/><path d="M0 33.500l111 8.500v4.500L0 36z" fill="#6a6a6a"/><path d="M0 35l111 11v13.500L55 50 0 40z" fill="#181818"/><path d="M0 40l55 10 56 9.500V60H0z" fill="#3a3a3a"/><path d="M0 46l111 14H60L0 52z" fill="#4c4a49"/><path d="M0 54l60 6H0z" fill="#3e3d3c"/></svg></div><div style="left:111px;top:0px;width:111.5px;height:60px;background:radial-gradient(ellipse 5px 4px at 18px 5.500px,#fff 0%,rgba(255,250,230,.95) 60%,rgba(255,240,200,0) 130%),radial-gradient(ellipse 17px 12px at 18px 5.500px,rgba(248,218,166,.95) 0%,rgba(228,194,152,0) 100%),radial-gradient(ellipse 52px 38px at 18px 5px,rgba(214,182,146,.9) 0%,rgba(200,172,142,0) 100%),#bfa58a;"></div><div style="left:222.5px;top:0px;width:74px;height:60px;background:radial-gradient(ellipse 5px 4px at 12px 5.500px,#fff 0%,rgba(255,250,230,.95) 60%,rgba(255,240,200,0) 130%),radial-gradient(ellipse 17px 12px at 12px 5.500px,rgba(248,218,166,.95) 0%,rgba(228,194,152,0) 100%),radial-gradient(ellipse 52px 38px at 12px 5px,rgba(214,182,146,.9) 0%,rgba(200,172,142,0) 100%),#bfa58a;"></div></div>
<div style="left:136px;top:797px;width:91.5px;height:24.5px;background:rgba(10,25,18,.62);border-radius:5px;"></div>
<svg style="left:139px;top:799px" width="19" height="19" viewBox="0 0 16 16"><rect x="0.700" y="0.700" width="14.600" height="14.600" rx="1.500" fill="none" stroke="#e8e8e8" stroke-width="1.400"/><path d="M4.300 0.700v14.600M11.700 0.700v14.600M4.300 8h7.400" stroke="#e8e8e8" stroke-width="1.300"/><path d="M0.700 4.300h3.600M0.700 8h3.600M0.700 11.700h3.600M11.700 4.300h3.600M11.700 8h3.600M11.700 11.700h3.600" stroke="#e8e8e8" stroke-width="1"/></svg>
<span class="t" style="left:166.0px;top:799.3px;font-size:14px;line-height:21px;color:#e8e8e8;font-weight:400;transform:scaleX(1.071);transform-origin:0 50%;">旅行動画</span>
<div style="left:234px;top:797px;width:24px;height:24.5px;background:rgba(70,55,50,.82);border-radius:5px;"></div>
<svg style="left:237px;top:801px" width="19" height="16" viewBox="0 0 23 19"><path d="M0.5 5.5h4v8h-4z M6 5.5L12 0.5v18L6 13.5z" fill="#e0e0e0"/><path d="M15 6.5a4 4 0 0 1 0 6M18 4a8 8 0 0 1 0 11" stroke="#e0e0e0" stroke-width="1.5" fill="none"/></svg>
<div style="left:122.5px;top:900px;width:909px;height:50px;background:#186a4b;border:2px solid #fff;border-radius:7px;box-sizing:border-box;overflow:hidden;"><svg style="left:0;top:0" width="905" height="46" viewBox="0 0 905 46"><path d="M0 46L0.0 21.9L1.1 21.7L1.6 20.7L2.7 20.2L3.2 23.0L4.3 22.7L4.8 22.3L5.9 22.3L6.4 20.3L7.5 20.4L8.0 22.8L9.1 23.3L9.6 21.6L10.7 21.8L11.2 23.3L12.3 23.4L12.8 15.3L13.9 15.2L14.4 20.8L15.5 21.1L16.0 23.0L17.1 23.0L17.6 19.8L18.7 19.3L19.2 14.8L20.3 14.7L20.8 22.8L21.9 22.7L22.4 21.3L23.5 21.4L24.0 19.1L25.1 19.6L25.6 19.1L26.7 19.3L27.2 21.3L28.3 21.9L28.8 18.5L29.9 18.7L30.4 20.8L31.5 20.9L32.0 13.4L33.1 14.0L33.6 21.2L34.7 21.0L35.2 14.5L36.3 14.9L36.8 21.4L37.9 20.9L38.4 22.4L39.5 22.9L40.0 20.1L41.1 19.9L41.6 21.9L42.7 21.4L43.2 21.8L44.3 22.0L44.8 15.2L45.9 15.0L46.4 19.8L47.5 19.7L48.0 22.0L49.1 22.2L49.6 21.9L50.7 22.0L51.2 21.0L52.3 20.9L52.8 18.7L53.9 19.3L54.4 23.2L55.5 22.6L56.0 23.8L57.1 23.2L57.6 23.3L58.7 22.8L59.2 23.4L60.3 23.6L60.8 24.5L61.9 24.8L62.4 19.9L63.5 20.4L64.0 25.0L65.1 25.1L65.6 26.5L66.7 26.3L67.2 25.6L68.3 25.9L68.8 25.6L69.9 25.9L70.4 17.8L71.5 17.4L72.0 24.8L73.1 25.1L73.6 26.9L74.7 27.3L75.2 23.8L76.3 23.4L76.8 24.1L77.9 24.6L78.4 21.4L79.5 21.5L80.0 24.7L81.1 25.1L81.6 18.0L82.7 18.2L83.2 24.0L84.3 23.7L84.8 19.1L85.9 19.0L86.4 24.4L87.5 24.9L88.0 17.9L89.1 18.3L89.6 22.7L90.7 23.2L91.2 16.7L92.3 17.2L92.8 24.2L93.9 24.0L94.4 23.6L95.5 23.7L96.0 25.8L97.1 25.3L97.6 23.7L98.7 24.2L99.2 23.7L100.3 23.8L100.8 26.8L101.9 26.4L102.4 25.7L103.5 25.7L104.0 25.1L105.1 25.2L105.6 18.0L106.7 18.0L107.2 24.7L108.3 24.8L108.8 16.1L109.9 16.7L110.4 22.5L111.5 21.9L112.0 22.7L113.1 22.2L113.6 18.7L114.7 18.6L115.2 22.5L116.3 21.9L116.8 21.4L117.9 20.8L118.4 20.0L119.5 19.5L120.0 23.2L121.1 23.0L121.6 20.7L122.7 20.5L123.2 23.4L124.3 23.5L124.8 21.3L125.9 20.9L126.4 21.2L127.5 21.6L128.0 21.2L129.1 21.3L129.6 23.3L130.7 23.5L131.2 21.2L132.3 21.1L132.8 21.9L133.9 22.2L134.4 22.7L135.5 22.6L136.0 20.0L137.1 19.8L137.6 20.1L138.7 19.8L139.2 15.0L140.3 15.2L140.8 20.4L141.9 20.6L142.4 21.1L143.5 20.6L144.0 19.2L145.1 19.6L145.6 21.5L146.7 22.0L147.2 16.2L148.3 15.8L148.8 20.7L149.9 21.1L150.4 20.3L151.5 20.6L152.0 23.5L153.1 23.5L153.6 14.5L154.7 15.0L155.2 25.5L156.3 25.9L156.8 19.2L157.9 19.3L158.4 22.2L159.5 22.1L160.0 21.6L161.1 21.1L161.6 21.0L162.7 20.8L163.2 14.0L164.3 14.3L164.8 20.2L165.9 20.2L166.4 20.3L167.5 19.9L168.0 22.4L169.1 22.9L169.6 21.0L170.7 21.2L171.2 19.5L172.3 19.6L172.8 16.1L173.9 16.6L174.4 22.3L175.5 22.2L176.0 20.6L177.1 20.3L177.6 18.5L178.7 18.4L179.2 25.4L180.3 25.7L180.8 23.9L181.9 23.9L182.4 22.5L183.5 22.9L184.0 21.9L185.1 21.9L185.6 22.4L186.7 22.3L187.2 22.5L188.3 22.5L188.8 18.2L189.9 18.4L190.4 21.7L191.5 21.4L192.0 21.6L193.1 21.9L193.6 21.8L194.7 21.5L195.2 23.6L196.3 23.9L196.8 17.2L197.9 16.9L198.4 22.8L199.5 23.0L200.0 25.8L201.1 25.8L201.6 22.7L202.7 23.2L203.2 21.6L204.3 21.2L204.8 21.7L205.9 21.2L206.4 19.2L207.5 18.7L208.0 21.6L209.1 21.9L209.6 20.7L210.7 20.9L211.2 12.3L212.3 12.8L212.8 19.0L213.9 18.5L214.4 22.3L215.5 22.5L216.0 13.4L217.1 13.6L217.6 20.5L218.7 20.7L219.2 20.7L220.3 20.3L220.8 20.0L221.9 20.1L222.4 19.2L223.5 19.2L224.0 18.2L225.1 18.4L225.6 18.6L226.7 18.9L227.2 16.1L228.3 16.5L228.8 21.2L229.9 20.9L230.4 20.4L231.5 20.3L232.0 19.3L233.1 19.2L233.6 14.9L234.7 14.4L235.2 20.7L236.3 20.9L236.8 16.0L237.9 16.3L238.4 17.7L239.5 17.9L240.0 21.4L241.1 21.4L241.6 15.0L242.7 15.4L243.2 19.8L244.3 20.3L244.8 18.6L245.9 18.7L246.4 17.1L247.5 17.4L248.0 18.1L249.1 18.1L249.6 16.9L250.7 16.3L251.2 16.1L252.3 16.1L252.8 16.9L253.9 16.6L254.4 12.1L255.5 12.3L256.0 17.2L257.1 17.8L257.6 9.1L258.7 9.2L259.2 20.5L260.3 20.0L260.8 17.4L261.9 17.2L262.4 16.5L263.5 16.0L264.0 16.8L265.1 17.4L265.6 17.7L266.7 17.5L267.2 17.7L268.3 18.2L268.8 19.4L269.9 19.4L270.4 19.0L271.5 18.6L272.0 21.1L273.1 21.4L273.6 20.1L274.7 20.2L275.2 21.1L276.3 21.5L276.8 13.7L277.9 13.9L278.4 23.6L279.5 23.7L280.0 19.0L281.1 19.4L281.6 22.2L282.7 21.9L283.2 17.9L284.3 17.5L284.8 20.0L285.9 20.0L286.4 18.0L287.5 17.9L288.0 15.8L289.1 15.7L289.6 22.3L290.7 21.9L291.2 21.9L292.3 21.5L292.8 21.2L293.9 20.6L294.4 12.7L295.5 12.7L296.0 20.2L297.1 19.9L297.6 18.9L298.7 18.7L299.2 21.5L300.3 22.1L300.8 18.0L301.9 17.5L302.4 19.5L303.5 19.6L304.0 11.0L305.1 10.9L305.6 19.3L306.7 19.8L307.2 24.7L308.3 25.3L308.8 15.2L309.9 14.7L310.4 24.0L311.5 24.5L312.0 22.2L313.1 22.5L313.6 20.0L314.7 20.5L315.2 21.8L316.3 21.5L316.8 20.4L317.9 20.2L318.4 22.7L319.5 22.8L320.0 22.9L321.1 22.5L321.6 16.1L322.7 16.4L323.2 17.6L324.3 18.1L324.8 20.6L325.9 21.1L326.4 21.1L327.5 21.4L328.0 22.5L329.1 22.4L329.6 13.6L330.7 13.1L331.2 21.6L332.3 21.3L332.8 15.8L333.9 15.9L334.4 13.5L335.5 13.2L336.0 19.0L337.1 19.4L337.6 18.6L338.7 18.7L339.2 17.9L340.3 18.3L340.8 12.3L341.9 11.9L342.4 12.6L343.5 12.3L344.0 17.3L345.1 17.5L345.6 17.6L346.7 17.4L347.2 18.3L348.3 17.8L348.8 17.6L349.9 18.0L350.4 20.1L351.5 20.0L352.0 14.7L353.1 14.7L353.6 21.1L354.7 21.4L355.2 20.1L356.3 20.3L356.8 24.7L357.9 24.5L358.4 17.8L359.5 17.4L360.0 19.2L361.1 19.7L361.6 19.3L362.7 19.8L363.2 21.2L364.3 21.7L364.8 20.1L365.9 20.0L366.4 20.7L367.5 21.3L368.0 12.7L369.1 12.3L369.6 23.3L370.7 23.1L371.2 21.8L372.3 21.3L372.8 16.7L373.9 16.5L374.4 21.0L375.5 20.8L376.0 19.1L377.1 18.6L377.6 23.1L378.7 23.3L379.2 20.1L380.3 20.6L380.8 18.7L381.9 18.7L382.4 21.7L383.5 21.6L384.0 16.1L385.1 16.5L385.6 17.8L386.7 18.1L387.2 18.9L388.3 18.9L388.8 20.6L389.9 21.0L390.4 22.6L391.5 22.9L392.0 18.3L393.1 17.7L393.6 24.4L394.7 24.4L395.2 26.4L396.3 26.8L396.8 22.2L397.9 22.1L398.4 23.5L399.5 24.0L400.0 20.8L401.1 21.1L401.6 23.5L402.7 23.9L403.2 22.1L404.3 21.5L404.8 24.5L405.9 25.0L406.4 25.3L407.5 25.9L408.0 24.2L409.1 24.1L409.6 22.6L410.7 22.8L411.2 23.6L412.3 23.4L412.8 25.8L413.9 26.1L414.4 25.2L415.5 24.8L416.0 25.5L417.1 25.4L417.6 23.3L418.7 23.9L419.2 18.7L420.3 18.7L420.8 17.9L421.9 18.4L422.4 25.1L423.5 25.0L424.0 23.3L425.1 23.9L425.6 15.1L426.7 14.7L427.2 23.2L428.3 23.0L428.8 23.4L429.9 23.9L430.4 24.7L431.5 24.3L432.0 23.1L433.1 22.6L433.6 21.0L434.7 21.1L435.2 21.2L436.3 21.3L436.8 17.6L437.9 18.1L438.4 19.0L439.5 18.7L440.0 18.9L441.1 19.5L441.6 23.5L442.7 23.1L443.2 20.6L444.3 20.7L444.8 17.3L445.9 16.9L446.4 23.7L447.5 24.1L448.0 24.3L449.1 24.3L449.6 19.1L450.7 19.7L451.2 21.1L452.3 20.6L452.8 23.3L453.9 22.7L454.4 23.8L455.5 24.4L456.0 17.1L457.1 17.6L457.6 22.5L458.7 22.3L459.2 26.9L460.3 27.2L460.8 21.9L461.9 21.9L462.4 22.1L463.5 22.5L464.0 22.8L465.1 23.3L465.6 12.5L466.7 12.9L467.2 19.7L468.3 19.1L468.8 19.4L469.9 19.9L470.4 15.3L471.5 15.6L472.0 19.2L473.1 19.2L473.6 14.9L474.7 14.9L475.2 22.2L476.3 22.0L476.8 22.8L477.9 22.6L478.4 20.8L479.5 21.3L480.0 20.1L481.1 19.8L481.6 17.6L482.7 17.6L483.2 23.7L484.3 23.4L484.8 20.5L485.9 20.5L486.4 22.4L487.5 23.0L488.0 22.8L489.1 22.9L489.6 24.7L490.7 25.2L491.2 15.4L492.3 15.3L492.8 23.5L493.9 23.6L494.4 22.5L495.5 23.0L496.0 25.1L497.1 25.1L497.6 27.2L498.7 27.6L499.2 21.0L500.3 20.8L500.8 21.7L501.9 21.5L502.4 19.9L503.5 20.4L504.0 23.8L505.1 24.2L505.6 22.5L506.7 22.5L507.2 15.7L508.3 15.5L508.8 23.4L509.9 23.1L510.4 24.1L511.5 24.3L512.0 20.5L513.1 19.9L513.6 18.0L514.7 17.9L515.2 22.2L516.3 22.4L516.8 21.5L517.9 21.0L518.4 20.2L519.5 19.7L520.0 22.0L521.1 22.6L521.6 18.6L522.7 18.5L523.2 20.2L524.3 20.0L524.8 21.9L525.9 22.4L526.4 23.9L527.5 24.1L528.0 23.3L529.1 23.4L529.6 18.4L530.7 18.4L531.2 20.4L532.3 20.2L532.8 20.0L533.9 20.1L534.4 15.5L535.5 15.1L536.0 21.7L537.1 21.5L537.6 20.8L538.7 21.2L539.2 18.9L540.3 18.8L540.8 15.0L541.9 14.7L542.4 20.1L543.5 19.7L544.0 21.1L545.1 20.7L545.6 22.4L546.7 22.3L547.2 19.2L548.3 18.7L548.8 21.9L549.9 21.6L550.4 20.6L551.5 20.4L552.0 16.4L553.1 16.5L553.6 19.9L554.7 19.6L555.2 18.0L556.3 17.6L556.8 19.7L557.9 19.9L558.4 17.5L559.5 17.0L560.0 16.7L561.1 16.7L561.6 10.0L562.7 10.2L563.2 18.5L564.3 19.1L564.8 18.0L565.9 18.0L566.4 18.6L567.5 18.4L568.0 16.7L569.1 16.2L569.6 17.5L570.7 17.5L571.2 17.7L572.3 17.6L572.8 18.1L573.9 18.5L574.4 12.9L575.5 13.0L576.0 19.3L577.1 19.7L577.6 18.7L578.7 19.1L579.2 16.6L580.3 16.9L580.8 20.7L581.9 20.8L582.4 20.5L583.5 20.5L584.0 15.0L585.1 14.8L585.6 15.0L586.7 14.6L587.2 20.3L588.3 19.8L588.8 21.6L589.9 21.2L590.4 17.8L591.5 17.9L592.0 18.4L593.1 18.4L593.6 16.9L594.7 16.7L595.2 10.5L596.3 10.5L596.8 12.1L597.9 11.8L598.4 19.3L599.5 18.9L600.0 20.5L601.1 20.8L601.6 18.5L602.7 18.1L603.2 18.6L604.3 18.3L604.8 19.5L605.9 19.3L606.4 12.6L607.5 12.3L608.0 22.5L609.1 22.8L609.6 19.5L610.7 19.4L611.2 13.5L612.3 13.6L612.8 17.7L613.9 17.8L614.4 21.1L615.5 21.1L616.0 18.7L617.1 18.9L617.6 15.9L618.7 16.2L619.2 16.7L620.3 17.3L620.8 20.1L621.9 20.4L622.4 22.5L623.5 22.7L624.0 18.6L625.1 18.7L625.6 18.5L626.7 18.0L627.2 22.6L628.3 23.2L628.8 15.1L629.9 14.5L630.4 22.3L631.5 21.9L632.0 23.0L633.1 22.8L633.6 12.8L634.7 12.6L635.2 19.8L636.3 20.0L636.8 16.9L637.9 17.2L638.4 16.7L639.5 16.2L640.0 20.7L641.1 20.8L641.6 17.7L642.7 17.1L643.2 14.8L644.3 14.5L644.8 18.1L645.9 18.3L646.4 17.9L647.5 17.8L648.0 12.6L649.1 12.6L649.6 19.8L650.7 19.9L651.2 17.8L652.3 17.3L652.8 12.4L653.9 13.0L654.4 19.5L655.5 19.4L656.0 19.0L657.1 18.9L657.6 20.0L658.7 19.4L659.2 17.6L660.3 18.1L660.8 20.1L661.9 19.9L662.4 20.5L663.5 20.1L664.0 10.7L665.1 10.1L665.6 15.4L666.7 15.7L667.2 19.2L668.3 19.2L668.8 13.1L669.9 13.1L670.4 16.0L671.5 16.2L672.0 18.2L673.1 18.4L673.6 21.8L674.7 21.9L675.2 24.4L676.3 24.1L676.8 16.1L677.9 16.3L678.4 19.0L679.5 18.9L680.0 22.0L681.1 21.7L681.6 19.4L682.7 19.1L683.2 18.1L684.3 18.1L684.8 20.4L685.9 20.5L686.4 20.1L687.5 19.5L688.0 18.6L689.1 18.4L689.6 15.7L690.7 15.4L691.2 20.5L692.3 20.7L692.8 12.2L693.9 12.2L694.4 20.1L695.5 20.0L696.0 23.5L697.1 23.8L697.6 11.3L698.7 11.6L699.2 19.6L700.3 19.1L700.8 19.7L701.9 19.2L702.4 20.7L703.5 20.5L704.0 20.2L705.1 20.1L705.6 16.2L706.7 16.1L707.2 22.9L708.3 23.4L708.8 15.9L709.9 15.7L710.4 23.5L711.5 23.2L712.0 24.9L713.1 24.6L713.6 24.7L714.7 24.4L715.2 24.3L716.3 23.9L716.8 24.0L717.9 23.9L718.4 17.3L719.5 17.8L720.0 23.4L721.1 22.9L721.6 22.7L722.7 23.3L723.2 22.8L724.3 22.9L724.8 25.5L725.9 25.0L726.4 19.1L727.5 19.7L728.0 24.9L729.1 24.6L729.6 15.7L730.7 15.5L731.2 23.9L732.3 24.1L732.8 18.8L733.9 18.3L734.4 23.1L735.5 22.9L736.0 26.6L737.1 26.5L737.6 18.6L738.7 19.0L739.2 22.8L740.3 22.8L740.8 16.9L741.9 16.9L742.4 23.0L743.5 23.4L744.0 24.9L745.1 24.3L745.6 22.5L746.7 22.5L747.2 22.9L748.3 23.2L748.8 24.0L749.9 23.5L750.4 15.0L751.5 14.7L752.0 24.6L753.1 25.0L753.6 21.9L754.7 22.5L755.2 26.1L756.3 26.5L756.8 23.5L757.9 23.9L758.4 21.6L759.5 22.0L760.0 15.9L761.1 15.4L761.6 24.7L762.7 24.5L763.2 19.7L764.3 19.9L764.8 24.6L765.9 25.2L766.4 23.8L767.5 24.1L768.0 22.1L769.1 22.3L769.6 19.0L770.7 19.6L771.2 23.0L772.3 22.6L772.8 20.5L773.9 20.5L774.4 14.6L775.5 15.0L776.0 16.9L777.1 16.5L777.6 19.6L778.7 19.5L779.2 20.8L780.3 20.6L780.8 21.4L781.9 21.7L782.4 13.9L783.5 14.2L784.0 20.4L785.1 21.0L785.6 18.9L786.7 18.8L787.2 24.0L788.3 24.2L788.8 21.3L789.9 21.5L790.4 21.0L791.5 21.0L792.0 21.8L793.1 21.4L793.6 14.0L794.7 13.5L795.2 22.4L796.3 22.7L796.8 21.4L797.9 21.5L798.4 20.1L799.5 19.7L800.0 21.7L801.1 21.7L801.6 24.3L802.7 24.7L803.2 18.8L804.3 18.8L804.8 25.6L805.9 25.4L806.4 24.8L807.5 24.9L808.0 24.2L809.1 24.2L809.6 19.6L810.7 19.5L811.2 25.0L812.3 24.5L812.8 18.3L813.9 18.4L814.4 24.9L815.5 25.1L816.0 25.4L817.1 25.1L817.6 18.5L818.7 18.2L819.2 22.2L820.3 22.3L820.8 24.7L821.9 24.9L822.4 24.9L823.5 25.3L824.0 21.6L825.1 21.8L825.6 17.9L826.7 17.5L827.2 24.2L828.3 23.7L828.8 25.4L829.9 25.7L830.4 22.5L831.5 21.9L832.0 26.1L833.1 26.3L833.6 22.0L834.7 22.5L835.2 25.0L836.3 25.3L836.8 24.3L837.9 24.5L838.4 24.7L839.5 24.1L840.0 23.3L841.1 22.9L841.6 23.7L842.7 24.2L843.2 22.6L844.3 23.1L844.8 15.8L845.9 16.2L846.4 22.3L847.5 22.1L848.0 25.0L849.1 24.6L849.6 22.9L850.7 23.3L851.2 27.4L852.3 27.6L852.8 23.8L853.9 23.7L854.4 22.5L855.5 22.3L856.0 20.9L857.1 21.3L857.6 16.8L858.7 17.2L859.2 15.1L860.3 15.2L860.8 21.9L861.9 21.8L862.4 20.5L863.5 21.1L864.0 22.0L865.1 22.5L865.6 19.7L866.7 20.1L867.2 21.6L868.3 21.7L868.8 21.8L869.9 21.4L870.4 11.7L871.5 12.1L872.0 19.3L873.1 19.1L873.6 11.9L874.7 12.2L875.2 11.2L876.3 10.6L876.8 18.8L877.9 18.2L878.4 19.3L879.5 19.5L880.0 19.8L881.1 19.6L881.6 17.8L882.7 17.3L883.2 14.5L884.3 14.9L884.8 20.9L885.9 21.4L886.4 22.3L887.5 22.6L888.0 19.5L889.1 19.3L889.6 20.3L890.7 20.8L891.2 18.8L892.3 19.2L892.8 14.7L893.9 14.3L894.4 18.4L895.5 18.8L896.0 12.3L897.1 12.2L897.6 14.9L898.7 15.0L899.2 20.6L900.3 20.2L900.8 16.2L901.9 16.6L902.4 16.6L903.5 16.7L904.0 20.2L905.1 19.7L905 46z" fill="#27c38b"/></svg></div>
<div style="left:126px;top:904.3px;width:68px;height:23.3px;background:rgba(5,34,23,.88);border-radius:6px;"></div>
<svg style="left:135.8px;top:907.8px" width="16" height="16" viewBox="0 0 16 16"><path d="M5.400 3.300L14.800 1v10.800M5.400 3.300v9.700" stroke="#e8e8e8" stroke-width="2" fill="none"/><path d="M5.400 6.200l9.400-2.300" stroke="#e8e8e8" stroke-width="1.400"/><circle cx="3.200" cy="13.200" r="2.100" fill="none" stroke="#e8e8e8" stroke-width="2"/><circle cx="12.600" cy="12" r="2.100" fill="none" stroke="#e8e8e8" stroke-width="2"/></svg>
<span class="t" style="left:159.3px;top:906.0px;font-size:14px;line-height:21px;color:#e8e8e8;font-weight:400;transform:scaleX(1.018);transform-origin:0 50%;">音楽</span>
<div style="left:123px;top:961px;width:660px;height:48px;background:#186a4b;border-radius:6px;overflow:hidden;"><svg style="left:0;top:0" width="660" height="48" viewBox="0 0 660 48"><path d="M0 48L0.0 33.1L1.1 32.6L1.6 35.1L2.7 35.1L3.2 34.1L4.3 33.6L4.8 32.8L5.9 33.2L6.4 26.9L7.5 27.4L8.0 31.6L9.1 31.1L9.6 24.9L10.7 24.5L11.2 27.4L12.3 27.1L12.8 25.4L13.9 25.2L14.4 22.4L15.5 22.0L16.0 22.6L17.1 22.4L17.6 23.0L18.7 22.8L19.2 22.4L20.3 22.0L20.8 23.2L21.9 23.6L22.4 12.8L23.5 12.3L24.0 23.7L25.1 23.3L25.6 16.2L26.7 16.5L27.2 22.9L28.3 22.7L28.8 22.4L29.9 22.5L30.4 23.2L31.5 23.7L32.0 23.0L33.1 22.5L33.6 22.1L34.7 22.7L35.2 16.9L36.3 17.1L36.8 24.5L37.9 24.1L38.4 16.2L39.5 15.7L40.0 27.0L41.1 26.5L41.6 23.2L42.7 23.7L43.2 22.1L44.3 21.8L44.8 26.9L45.9 27.5L46.4 21.5L47.5 21.1L48.0 24.0L49.1 23.7L49.6 26.0L50.7 25.8L51.2 24.3L52.3 24.5L52.8 24.7L53.9 24.9L54.4 26.6L55.5 26.9L56.0 23.8L57.1 23.7L57.6 18.8L58.7 18.3L59.2 24.1L60.3 23.9L60.8 24.3L61.9 23.8L62.4 17.0L63.5 17.2L64.0 22.2L65.1 22.0L65.6 26.6L66.7 27.2L67.2 25.2L68.3 24.7L68.8 27.9L69.9 28.3L70.4 16.1L71.5 16.2L72.0 25.5L73.1 24.9L73.6 23.8L74.7 24.2L75.2 18.2L76.3 17.8L76.8 22.3L77.9 22.6L78.4 15.2L79.5 15.8L80.0 21.4L81.1 21.8L81.6 15.7L82.7 15.6L83.2 20.2L84.3 19.9L84.8 21.6L85.9 21.5L86.4 20.6L87.5 21.2L88.0 19.3L89.1 18.9L89.6 23.3L90.7 23.8L91.2 21.1L92.3 21.3L92.8 14.3L93.9 14.8L94.4 21.6L95.5 21.6L96.0 24.0L97.1 23.8L97.6 21.9L98.7 21.8L99.2 23.5L100.3 23.8L100.8 21.7L101.9 22.2L102.4 13.8L103.5 14.4L104.0 25.3L105.1 24.9L105.6 25.3L106.7 25.5L107.2 23.5L108.3 23.4L108.8 22.2L109.9 21.9L110.4 20.8L111.5 20.9L112.0 24.3L113.1 23.8L113.6 24.0L114.7 24.1L115.2 21.7L116.3 22.2L116.8 23.1L117.9 23.1L118.4 24.7L119.5 24.3L120.0 24.7L121.1 24.3L121.6 22.9L122.7 23.0L123.2 23.5L124.3 23.5L124.8 15.6L125.9 15.3L126.4 23.8L127.5 23.8L128.0 22.9L129.1 23.4L129.6 23.6L130.7 23.6L131.2 23.6L132.3 23.5L132.8 23.8L133.9 24.4L134.4 23.6L135.5 24.1L136.0 25.6L137.1 26.1L137.6 21.4L138.7 21.3L139.2 25.0L140.3 25.2L140.8 24.9L141.9 24.5L142.4 25.6L143.5 25.2L144.0 25.4L145.1 25.0L145.6 27.7L146.7 28.3L147.2 21.0L148.3 21.0L148.8 23.9L149.9 24.2L150.4 29.5L151.5 29.4L152.0 32.1L153.1 32.1L153.6 29.4L154.7 29.8L155.2 22.4L156.3 21.9L156.8 24.2L157.9 24.1L158.4 26.2L159.5 25.9L160.0 28.8L161.1 28.9L161.6 24.7L162.7 24.9L163.2 18.0L164.3 18.2L164.8 17.2L165.9 16.7L166.4 25.6L167.5 25.4L168.0 26.6L169.1 26.3L169.6 28.0L170.7 27.7L171.2 26.1L172.3 25.7L172.8 30.1L173.9 29.9L174.4 22.1L175.5 21.5L176.0 19.8L177.1 19.9L177.6 27.8L178.7 28.3L179.2 28.2L180.3 28.2L180.8 27.0L181.9 26.8L182.4 27.1L183.5 27.6L184.0 27.8L185.1 28.0L185.6 26.8L186.7 26.7L187.2 26.9L188.3 27.2L188.8 26.1L189.9 26.6L190.4 26.2L191.5 25.9L192.0 23.0L193.1 22.6L193.6 17.9L194.7 18.5L195.2 17.4L196.3 17.2L196.8 22.9L197.9 22.8L198.4 21.1L199.5 20.5L200.0 22.6L201.1 22.0L201.6 29.6L202.7 29.7L203.2 25.9L204.3 26.1L204.8 25.0L205.9 24.8L206.4 26.1L207.5 25.7L208.0 24.4L209.1 23.8L209.6 23.7L210.7 23.9L211.2 23.9L212.3 23.5L212.8 24.5L213.9 24.9L214.4 23.4L215.5 23.5L216.0 23.1L217.1 23.3L217.6 22.9L218.7 22.7L219.2 26.1L220.3 26.1L220.8 24.3L221.9 24.6L222.4 16.8L223.5 17.1L224.0 25.3L225.1 25.4L225.6 27.1L226.7 26.8L227.2 19.7L228.3 19.3L228.8 25.3L229.9 25.3L230.4 26.9L231.5 27.1L232.0 25.8L233.1 26.0L233.6 24.9L234.7 25.2L235.2 27.9L236.3 27.3L236.8 21.8L237.9 22.0L238.4 21.0L239.5 20.9L240.0 18.6L241.1 18.2L241.6 25.7L242.7 25.1L243.2 27.4L244.3 28.0L244.8 23.9L245.9 24.5L246.4 27.8L247.5 27.4L248.0 26.4L249.1 26.0L249.6 25.1L250.7 25.6L251.2 16.1L252.3 16.1L252.8 21.7L253.9 21.6L254.4 21.7L255.5 21.5L256.0 16.1L257.1 16.5L257.6 26.4L258.7 26.6L259.2 18.7L260.3 18.6L260.8 22.9L261.9 22.7L262.4 23.0L263.5 22.5L264.0 13.9L265.1 13.6L265.6 25.4L266.7 25.0L267.2 25.0L268.3 25.5L268.8 23.5L269.9 24.0L270.4 23.0L271.5 23.3L272.0 26.2L273.1 26.2L273.6 23.7L274.7 23.4L275.2 26.2L276.3 25.7L276.8 26.3L277.9 26.6L278.4 15.5L279.5 15.3L280.0 25.3L281.1 24.9L281.6 25.0L282.7 25.0L283.2 24.8L284.3 25.4L284.8 20.6L285.9 20.1L286.4 20.3L287.5 20.1L288.0 22.7L289.1 23.0L289.6 22.9L290.7 22.9L291.2 23.8L292.3 23.5L292.8 14.3L293.9 14.5L294.4 16.2L295.5 15.9L296.0 21.3L297.1 21.8L297.6 19.3L298.7 18.7L299.2 21.9L300.3 22.3L300.8 20.0L301.9 19.4L302.4 20.0L303.5 20.4L304.0 18.1L305.1 17.8L305.6 14.7L306.7 14.9L307.2 17.6L308.3 17.8L308.8 18.2L309.9 18.2L310.4 20.8L311.5 20.5L312.0 17.7L313.1 17.4L313.6 13.7L314.7 13.9L315.2 14.8L316.3 14.9L316.8 13.3L317.9 12.7L318.4 20.3L319.5 20.9L320.0 19.2L321.1 19.1L321.6 11.1L322.7 11.3L323.2 14.8L324.3 15.0L324.8 13.0L325.9 13.5L326.4 16.4L327.5 16.3L328.0 10.8L329.1 11.1L329.6 9.9L330.7 9.7L331.2 15.0L332.3 15.3L332.8 20.1L333.9 20.1L334.4 15.3L335.5 15.5L336.0 12.6L337.1 12.2L337.6 15.2L338.7 14.7L339.2 19.1L340.3 19.5L340.8 17.7L341.9 18.2L342.4 9.6L343.5 9.9L344.0 20.1L345.1 19.9L345.6 20.3L346.7 19.7L347.2 22.6L348.3 22.2L348.8 12.3L349.9 12.7L350.4 17.5L351.5 17.0L352.0 22.3L353.1 21.9L353.6 19.7L354.7 19.1L355.2 19.8L356.3 20.1L356.8 19.4L357.9 19.9L358.4 20.9L359.5 21.4L360.0 11.3L361.1 11.5L361.6 21.5L362.7 21.3L363.2 13.8L364.3 14.3L364.8 20.7L365.9 20.1L366.4 22.3L367.5 22.9L368.0 21.5L369.1 21.4L369.6 21.6L370.7 21.2L371.2 20.5L372.3 20.9L372.8 20.5L373.9 20.3L374.4 25.0L375.5 24.5L376.0 22.3L377.1 22.0L377.6 16.4L378.7 16.2L379.2 19.0L380.3 19.6L380.8 19.0L381.9 19.0L382.4 19.5L383.5 19.1L384.0 20.2L385.1 20.4L385.6 18.8L386.7 19.0L387.2 20.8L388.3 20.5L388.8 21.8L389.9 21.4L390.4 17.1L391.5 17.6L392.0 20.6L393.1 21.2L393.6 10.4L394.7 10.6L395.2 11.5L396.3 11.9L396.8 17.6L397.9 17.0L398.4 16.4L399.5 17.0L400.0 18.6L401.1 18.4L401.6 17.7L402.7 17.4L403.2 18.1L404.3 17.6L404.8 18.8L405.9 18.5L406.4 16.5L407.5 16.2L408.0 19.0L409.1 18.6L409.6 23.8L410.7 23.4L411.2 11.8L412.3 11.8L412.8 16.0L413.9 16.1L414.4 15.8L415.5 16.1L416.0 15.3L417.1 15.8L417.6 19.6L418.7 19.4L419.2 19.0L420.3 19.6L420.8 11.3L421.9 10.9L422.4 20.0L423.5 19.9L424.0 16.9L425.1 17.3L425.6 16.3L426.7 16.3L427.2 17.1L428.3 16.6L428.8 19.2L429.9 18.8L430.4 18.0L431.5 18.5L432.0 18.6L433.1 18.9L433.6 12.9L434.7 13.4L435.2 15.4L436.3 14.9L436.8 19.0L437.9 19.1L438.4 8.1L439.5 7.7L440.0 18.0L441.1 18.4L441.6 14.2L442.7 14.2L443.2 15.1L444.3 15.3L444.8 10.9L445.9 11.2L446.4 20.7L447.5 20.2L448.0 19.0L449.1 19.2L449.6 20.5L450.7 20.6L451.2 20.5L452.3 20.4L452.8 14.0L453.9 14.0L454.4 21.8L455.5 22.1L456.0 15.8L457.1 15.3L457.6 22.7L458.7 22.2L459.2 21.7L460.3 21.2L460.8 13.4L461.9 13.8L462.4 15.9L463.5 15.8L464.0 11.3L465.1 11.9L465.6 20.9L466.7 20.5L467.2 20.0L468.3 20.5L468.8 11.9L469.9 12.5L470.4 26.0L471.5 25.6L472.0 11.6L473.1 11.2L473.6 21.4L474.7 21.1L475.2 22.3L476.3 22.0L476.8 20.2L477.9 20.7L478.4 20.8L479.5 20.4L480.0 14.5L481.1 14.6L481.6 22.1L482.7 22.2L483.2 21.5L484.3 21.0L484.8 20.2L485.9 20.1L486.4 11.2L487.5 11.3L488.0 22.9L489.1 22.8L489.6 23.8L490.7 23.2L491.2 14.8L492.3 15.3L492.8 22.7L493.9 22.5L494.4 22.3L495.5 22.4L496.0 23.6L497.1 24.1L497.6 17.7L498.7 17.2L499.2 26.6L500.3 26.4L500.8 24.5L501.9 24.6L502.4 24.5L503.5 24.5L504.0 24.6L505.1 24.3L505.6 17.5L506.7 17.9L507.2 21.9L508.3 21.6L508.8 24.4L509.9 24.5L510.4 22.9L511.5 22.8L512.0 20.5L513.1 20.2L513.6 14.2L514.7 14.1L515.2 14.2L516.3 13.6L516.8 20.9L517.9 20.5L518.4 21.9L519.5 21.9L520.0 20.1L521.1 19.7L521.6 22.3L522.7 22.8L523.2 19.4L524.3 18.8L524.8 19.1L525.9 19.0L526.4 19.5L527.5 19.1L528.0 20.0L529.1 19.8L529.6 19.6L530.7 20.1L531.2 13.7L532.3 13.7L532.8 19.9L533.9 19.6L534.4 20.6L535.5 20.3L536.0 16.3L537.1 16.0L537.6 20.8L538.7 21.1L539.2 22.5L540.3 22.3L540.8 23.1L541.9 23.2L542.4 21.6L543.5 22.2L544.0 22.6L545.1 22.8L545.6 21.3L546.7 21.6L547.2 23.9L548.3 24.1L548.8 24.2L549.9 23.8L550.4 15.0L551.5 14.8L552.0 22.1L553.1 22.3L553.6 22.1L554.7 22.4L555.2 24.1L556.3 23.9L556.8 21.3L557.9 21.7L558.4 23.9L559.5 24.4L560.0 17.4L561.1 17.0L561.6 23.9L562.7 24.3L563.2 21.7L564.3 21.9L564.8 20.7L565.9 21.0L566.4 25.4L567.5 24.9L568.0 15.7L569.1 15.6L569.6 23.2L570.7 23.2L571.2 21.5L572.3 21.0L572.8 23.4L573.9 23.7L574.4 23.9L575.5 23.9L576.0 24.6L577.1 24.1L577.6 21.3L578.7 20.9L579.2 23.3L580.3 22.7L580.8 24.5L581.9 24.9L582.4 25.9L583.5 25.7L584.0 14.3L585.1 14.0L585.6 26.2L586.7 26.2L587.2 26.7L588.3 26.2L588.8 24.3L589.9 24.6L590.4 26.8L591.5 26.7L592.0 14.7L593.1 14.2L593.6 17.0L594.7 17.0L595.2 25.3L596.3 25.0L596.8 24.7L597.9 25.0L598.4 23.4L599.5 23.2L600.0 15.9L601.1 16.1L601.6 17.5L602.7 17.8L603.2 17.5L604.3 18.0L604.8 19.8L605.9 20.0L606.4 18.5L607.5 18.2L608.0 22.9L609.1 22.5L609.6 12.9L610.7 13.1L611.2 23.7L612.3 23.2L612.8 23.2L613.9 23.6L614.4 22.6L615.5 22.3L616.0 20.6L617.1 20.5L617.6 28.8L618.7 29.0L619.2 25.4L620.3 25.3L620.8 27.2L621.9 27.1L622.4 26.2L623.5 26.1L624.0 27.4L625.1 27.3L625.6 29.1L626.7 29.6L627.2 28.4L628.3 28.9L628.8 29.4L629.9 29.4L630.4 31.1L631.5 30.6L632.0 31.5L633.1 31.8L633.6 28.7L634.7 28.6L635.2 32.5L636.3 32.7L636.8 28.8L637.9 29.1L638.4 34.3L639.5 34.9L640.0 35.6L641.1 35.2L641.6 35.1L642.7 35.1L643.2 36.9L644.3 37.0L644.8 36.8L645.9 37.0L646.4 37.5L647.5 37.4L648.0 36.0L649.1 35.8L649.6 36.7L650.7 36.5L651.2 39.9L652.3 39.3L652.8 41.9L653.9 42.1L654.4 42.4L655.5 42.7L656.0 43.9L657.1 43.6L657.6 45.5L658.7 45.0L659.2 46.9L660.3 47.1L660 48z" fill="#27c38b"/></svg></div>
<div style="left:126px;top:964.2px;width:120px;height:23.5px;background:rgba(5,34,23,.88);border-radius:6px;"></div>
<svg style="left:135.8px;top:967.8px" width="16" height="16" viewBox="0 0 16 16"><path d="M5.400 3.300L14.800 1v10.800M5.400 3.300v9.700" stroke="#e8e8e8" stroke-width="2" fill="none"/><path d="M5.400 6.200l9.400-2.300" stroke="#e8e8e8" stroke-width="1.400"/><circle cx="3.200" cy="13.200" r="2.100" fill="none" stroke="#e8e8e8" stroke-width="2"/><circle cx="12.600" cy="12" r="2.100" fill="none" stroke="#e8e8e8" stroke-width="2"/></svg>
<span class="t" style="left:158.5px;top:965.5px;font-size:15px;line-height:22px;color:#e8e8e8;font-weight:400;transform:scaleX(0.952);transform-origin:0 50%;">Photo Album</span>
<div style="left:419px;top:663px;width:2.3px;height:361.7px;background:#f84c4c;"></div>
<svg style="left:411px;top:662.800px" width="16.500" height="18.500" viewBox="0 0 16.500 18.500"><path d="M0 0h16.500v12.500L8.400 18.500 0 12.500z" fill="#f84c4c"/></svg>
<div style="left:407px;top:836px;width:25px;height:35.2px;background:#f64848;border-radius:12.500px;"></div>
<svg style="left:411.500px;top:843.500px" width="16" height="18" viewBox="0 0 18 20"><path d="M3.500 0.500l8.500 13M14.500 0.500L6 13.500" stroke="#fff" stroke-width="2.500" stroke-linecap="round"/><circle cx="3.700" cy="16.200" r="2.700" fill="none" stroke="#fff" stroke-width="2"/><circle cx="14.300" cy="16.200" r="2.700" fill="none" stroke="#fff" stroke-width="2"/></svg>
<svg style="left:0;top:0" width="1774" height="1030" viewBox="0 0 1774 1030"><path d="M277.300 654.500L292.100 657.300L289.300 659.200L330 704L282.300 665.500L281.500 668Z" fill="#cc3340"/><path d="M435.800 859.600L449 856.800L447.800 858.800L497 883.600L445.600 866.800L444.300 869.900Z" fill="#cc3340"/></svg>
</body></html>
